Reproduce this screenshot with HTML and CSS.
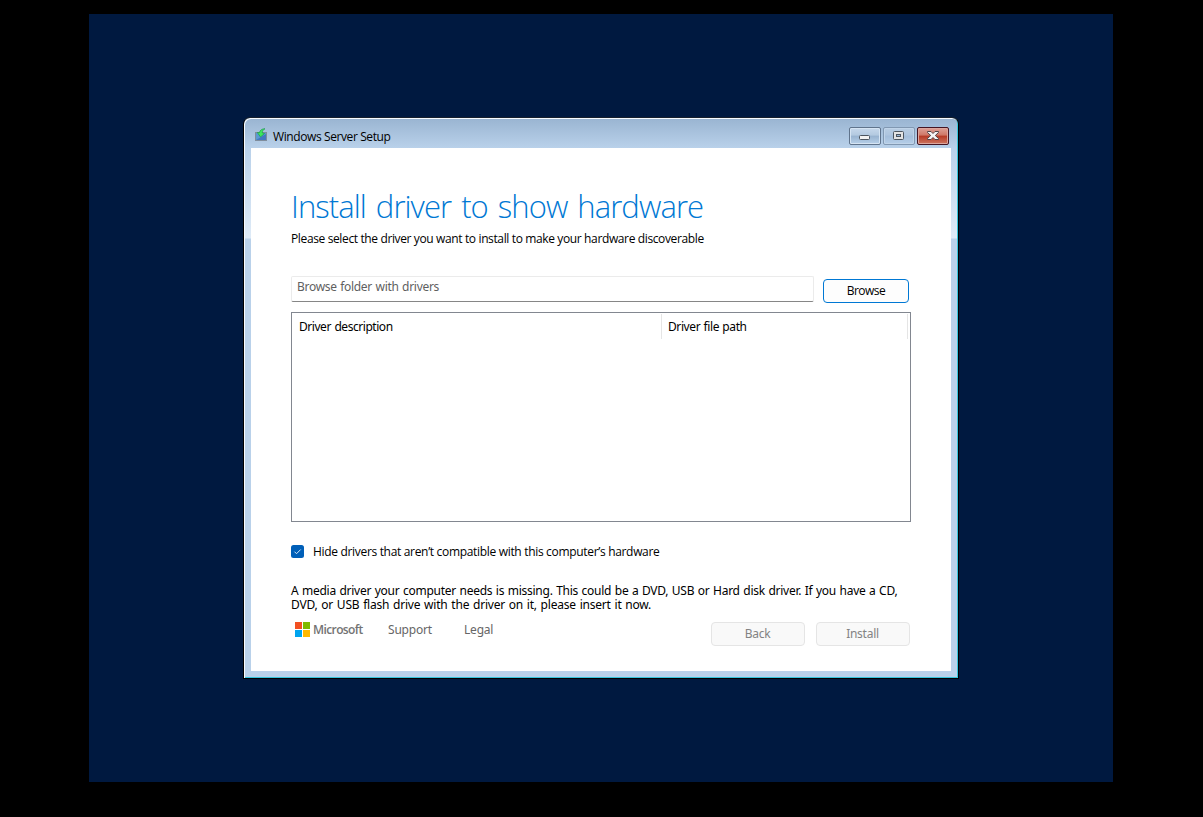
FILE: index.html
```html
<!DOCTYPE html>
<html lang="en">
<head>
<meta charset="utf-8">
<title>Windows Server Setup</title>
<link rel="stylesheet" href="styles.css">
</head>
<body>
<main class="desktop">
  <section class="window">
    <header class="titlebar">
      <svg class="app-icon" width="14" height="14" viewBox="0 0 14 14">
        <rect x="1.500" y="4.500" width="11" height="8" fill="#5a9ad2" stroke="#7f8d9d"/>
        <path d="M2 12 12 6v6z" fill="#4478c0"/>
        <path d="M11 .7C7.800 .8 5.800 2.300 5.500 4.500H3.300L6.500 9 10.500 5.500 8.200 4.800C8.400 3 9.300 1.800 11 .7z" fill="#3ee65c" stroke="#139447" stroke-width=".6"/>
      </svg>
      <h2 class="caption">Windows Server Setup</h2>
      <div class="controls">
        <button class="control minimize" aria-label="Minimize">
          <svg width="30" height="16" viewBox="0 0 30 16"><rect x="9.500" y="7.500" width="10" height="4" rx="1" fill="#f2f2f2" stroke="#4c555f"/></svg>
        </button>
        <button class="control maximize" aria-label="Maximize">
          <svg width="30" height="16" viewBox="0 0 30 16"><rect x="9.500" y="3.500" width="10" height="8" rx="1" fill="#e3e3e3" stroke="#4c555f"/><rect x="12.500" y="6.500" width="4" height="2" fill="#9bb8da" stroke="#4c555f"/></svg>
        </button>
        <button class="control close" aria-label="Close">
          <svg width="30" height="16" viewBox="0 0 30 16"><path d="M9.500 3.500h3.500l2 2 2-2h3.500v1L17.300 7.500l3.200 3v1H17l-2-2-2 2H9.500v-1l3.200-3-3.200-3z" fill="#f5f5f5" stroke="#514548"/></svg>
        </button>
      </div>
    </header>
    <div class="client">
      <h1 class="heading">Install driver to show hardware</h1>
      <p class="subtitle">Please select the driver you want to install to make your hardware discoverable</p>
      <div class="picker">
        <div class="path-field"><span class="t-placeholder">Browse folder with drivers</span></div>
        <button class="button browse"><span>Browse</span></button>
      </div>
      <div class="driver-list">
        <div class="list-head">
          <div class="col description"><span class="t-desc">Driver description</span></div>
          <div class="col path"><span class="t-path">Driver file path</span></div>
        </div>
      </div>
      <label class="option">
        <svg width="13" height="13" viewBox="0 0 13 13"><rect width="13" height="13" rx="2.500" fill="#005fb8"/><path d="M3.500 6.700 5.500 8.700 9.700 4.500" fill="none" stroke="#d5e7f7"/></svg>
        <span class="t-option">Hide drivers that aren’t compatible with this computer’s hardware</span>
      </label>
      <p class="notice"><span class="line-one">A media driver your computer needs is missing. This could be a DVD, USB or Hard disk driver. If you have a CD,</span><br><span class="line-two">DVD, or USB flash drive with the driver on it, please insert it now.</span></p>
      <footer class="footer">
        <div class="brand">
          <svg width="15" height="15" viewBox="0 0 15 15"><path fill="#f25022" d="M0 0h7v7H0z"/><path fill="#7fba00" d="M8 0h7v7H8z"/><path fill="#00a4ef" d="M0 8h7v7H0z"/><path fill="#ffb900" d="M8 8h7v7H8z"/></svg>
          <span>Microsoft</span>
        </div>
        <a class="link support">Support</a>
        <a class="link legal">Legal</a>
        <div class="actions">
          <button class="button disabled" disabled><span class="t-back">Back</span></button>
          <button class="button disabled" disabled><span class="t-install">Install</span></button>
        </div>
      </footer>
    </div>
  </section>
</main>
</body>
</html>
```

FILE: styles.css
```css
* { box-sizing: border-box; }
body {
  margin: 0;
  height: 817px;
  overflow: hidden;
  background: #000;
  color: #000;
  font: 12px/16px "Open Sans", sans-serif;
}
h1, h2, p { margin: 0; font-weight: 400; }
button { font: inherit; color: inherit; padding: 0; }
svg { display: block; flex: none; }
span, a, h1, h2, .subtitle { white-space: nowrap; }
.desktop {
  width: 1024px;
  height: 768px;
  margin: 14px 0 0 89px;
  padding: 103px 0 0 154px;
  background: #001940;
}
.window {
  width: 716px;
  height: 562px;
  border: 1px solid #000;
  border-top-color: #17202d;
  border-radius: 7px 7px 0 0;
  padding: 0 6px 6px;
  background:
    linear-gradient(#99b4d1, #b9d1ea 30px, #b9d1ea 31px, transparent 31px),
    linear-gradient(#b9d1ea 30px, #dfebf7 120px, #b9d1ea 121px);
  box-shadow: inset 1px 1px #f7fbff, inset -1px -1px #35c5dd;
}
.titlebar { display: flex; height: 30px; padding: 9px 3px 0 4px; }
.app-icon { margin-top: 1px; }
.caption { margin: 2px 0 0 5px; font-size: 12px; line-height: 16px; letter-spacing: -.4px; }
.controls { display: flex; gap: 2px; margin-left: auto; }
.control {
  width: 32px;
  height: 18px;
  border: 1px solid #60748c;
  border-radius: 2px;
  background: linear-gradient(#c6d8eb, #b3c9e0 45%, #98b3d0 50%, #b7d0e9);
  box-shadow: inset 0 0 0 1px #d5e4f3;
}
.maximize { border-color: #8198b2; background: linear-gradient(#b8cde3, #aec5df 45%, #a4bedb 50%, #b5cee8); box-shadow: inset 0 0 0 1px #c0d4e9; }
.close { border-color: #451522; background: linear-gradient(#dda197, #cf7766 45%, #b63a25 50%, #cd7661); box-shadow: inset 0 0 0 1px #dda69d; }
.client {
  width: 700px;
  height: 523px;
  margin-left: 1px;
  padding: 35px 40px 0;
  background: #fff;
}
.heading { font-size: 31px; line-height: 46px; font-weight: 300; letter-spacing: -.92px; word-spacing: 2.8px; color: #0078d4; }
.subtitle { height: 16px; margin-top: 2px; letter-spacing: -.37px; }
.picker { display: flex; align-items: flex-start; margin-top: 29px; }
.path-field {
  width: 523px;
  height: 26px;
  padding: 2px 5px;
  border: 1px solid #ebebeb;
  border-bottom-color: #868686;
  border-radius: 2px;
  font: 12px/16px "Noto Sans", sans-serif;
  letter-spacing: -.3px;
  word-spacing: .7px;
  color: #5f5f5f;
}
.button {
  display: flex;
  align-items: center;
  justify-content: center;
  width: 94px;
  height: 24px;
  border: 1px solid #e5e5e5;
  border-radius: 4px;
  background: #f9f9f9;
}
.browse { width: 86px; margin: 3px 0 0 9px; border-color: #0078d4; background: #fdfdfd; letter-spacing: -.5px; }
.disabled { color: #838383; font: 12px/16px "Noto Sans", sans-serif; letter-spacing: -.25px; padding-right: 1px; }
.driver-list {
  width: 620px;
  height: 210px;
  margin-top: 9px;
  padding: 1px 2px;
  border: 1px solid #828790;
  font: 12px/16px "Noto Sans", sans-serif;
}
.list-head { display: flex; height: 25px; }
.col { padding: 5px 0 0 5px; border-right: 1px solid #e5e5e5; letter-spacing: -.45px; word-spacing: .8px; }
.description { width: 368px; }
.path { width: 246px; padding-left: 6px; letter-spacing: -.4px; word-spacing: .6px; }
.option { display: flex; align-items: flex-start; gap: 9px; height: 16px; margin-top: 23px; }
.t-option { margin-top: -1px; letter-spacing: -.32px; }
.notice { margin-top: 23px; font: 12px/14px "Noto Sans", sans-serif; }
.line-one { letter-spacing: -.26px; word-spacing: .7px; }
.line-two { letter-spacing: -.2px; word-spacing: .83px; }
.footer { display: flex; align-items: flex-start; margin-top: 10px; padding-right: 1px; font: 12px/16px "Noto Sans", sans-serif; color: #666; }
.brand { display: flex; align-items: center; gap: 3px; width: 93px; padding-left: 4px; font: 600 12px/15px "Open Sans", sans-serif; letter-spacing: -.6px; color: #737373; }
.link { width: 76px; line-height: 16px; margin-left: 4px; letter-spacing: -.2px; }
.legal { margin-left: 0; }
.actions { display: flex; gap: 11px; margin-left: auto; }
```
